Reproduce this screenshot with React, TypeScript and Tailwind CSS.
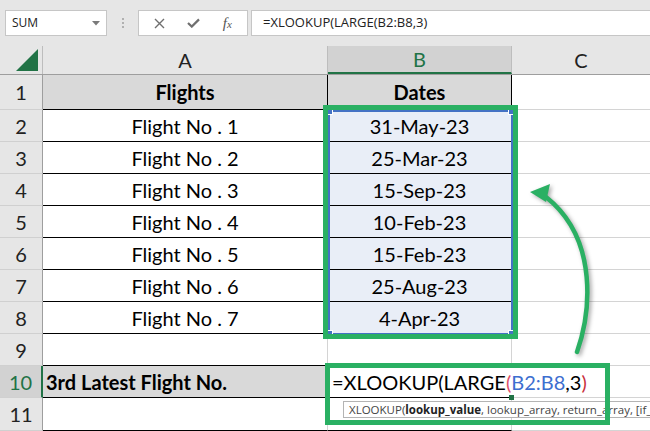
import React from 'react';

// Excel-like sheet: XLOOKUP / LARGE demo

const FLIGHTS = [
  'Flight No . 1',
  'Flight No . 2',
  'Flight No . 3',
  'Flight No . 4',
  'Flight No . 5',
  'Flight No . 6',
  'Flight No . 7',
];

const DATES = ['31-May-23', '25-Mar-23', '15-Sep-23', '10-Feb-23', '15-Feb-23', '25-Aug-23', '4-Apr-23'];

// ============================================
// FORMULA BAR
// ============================================

function Toolbar() {
  return (
    <div className="h-[46px] flex items-start pt-[10px] pl-[5px] bg-[#e6e6e6] font-['Open_Sans',sans-serif]">
      <div className="w-[102px] h-[26px] flex items-center justify-between bg-white border border-[#c6c6c6] pl-[6px] pr-[6px] text-[12px] text-[#222]">
        <span>SUM</span>
        <svg width="8" height="5" viewBox="0 0 8 5">
          <path d="M0 0 L8 0 L4 4.5 Z" fill="#7a7a7a" />
        </svg>
      </div>
      <div className="w-[31px] h-[26px] flex flex-col items-center justify-center gap-[2px]">
        <span className="w-[2px] h-[2px] bg-[#b0b0b0]" />
        <span className="w-[2px] h-[2px] bg-[#b0b0b0]" />
        <span className="w-[2px] h-[2px] bg-[#b0b0b0]" />
      </div>
      <div className="w-[110px] h-[26px] flex items-center justify-around bg-white border border-[#c6c6c6] px-[4px]">
        <svg width="11" height="11" viewBox="0 0 11 11">
          <path d="M1 1 L10 10 M10 1 L1 10" stroke="#6f6f6f" strokeWidth="1.4" />
        </svg>
        <svg width="13" height="10" viewBox="0 0 13 10">
          <path d="M1 5 L4.8 8.6 L12 1.4" stroke="#6f6f6f" strokeWidth="2.2" fill="none" />
        </svg>
        <span className="text-[15px] text-[#555] italic font-['Liberation_Serif',serif] leading-none">
          f<span className="text-[11px]">x</span>
        </span>
      </div>
      <div className="ml-[3px] flex-1 h-[26px] flex items-center bg-white border border-[#c6c6c6] border-r-0 pl-[11px] text-[13px] text-[#222]">
        =XLOOKUP(LARGE(B2:B8,3)
      </div>
    </div>
  );
}

// ============================================
// GRID
// ============================================

function ColumnHeaders() {
  return (
    <div className="h-[29px] flex bg-[#e6e6e6] border-b border-[#9e9e9e] text-[20px] text-[#222]">
      <div className="w-[43px] shrink-0 flex items-end justify-end pr-[4px] pb-[3px] border-r border-[#bdbdbd]">
        <svg width="22" height="22" viewBox="0 0 22 22">
          <path d="M22 0 L22 22 L0 22 Z" fill="#217346" />
        </svg>
      </div>
      <div className="w-[285px] shrink-0 flex items-center justify-center border-r border-[#bdbdbd]">A</div>
      <div className="w-[184px] shrink-0 flex items-center justify-center bg-[#d2d2d2] text-[#217346] border-b-2 border-[#217346] border-r border-r-[#bdbdbd]">
        B
      </div>
      <div className="flex-1 flex items-center justify-center">C</div>
    </div>
  );
}

function RowHead({ n, active }: { n: number; active?: boolean }) {
  return (
    <div
      className={`w-[43px] shrink-0 flex items-center justify-center border-b border-[#d0d0d0] ${
        active
          ? 'bg-[#d2d2d2] text-[#217346] border-r-2 border-r-[#217346]'
          : 'bg-[#e6e6e6] text-[#222] border-r border-r-[#9e9e9e]'
      }`}
    >
      {n}
    </div>
  );
}

function Sheet() {
  return (
    <div className="text-[20px] text-black bg-white">
      {/* Row 1: headings */}
      <div className="h-[35px] flex">
        <RowHead n={1} />
        <div className="w-[285px] shrink-0 flex items-center justify-center bg-[#d9d9d9] font-bold border-r border-b border-black">
          Flights
        </div>
        <div className="w-[184px] shrink-0 flex items-center justify-center bg-[#d9d9d9] font-bold border-r border-b border-black">
          Dates
        </div>
        <div className="flex-1 border-b border-[#d4d4d4]" />
      </div>

      {/* Rows 2-8: data */}
      {FLIGHTS.map((f, i) => (
        <div key={f} className="h-[32px] flex">
          <RowHead n={i + 2} />
          <div className="w-[285px] shrink-0 flex items-center justify-center border-r border-b border-black">{f}</div>
          <div className="w-[184px] shrink-0 flex items-center justify-center bg-[#e9eef7] border-r border-b border-black">
            {DATES[i]}
          </div>
          <div className="flex-1 border-b border-[#d4d4d4]" />
        </div>
      ))}

      {/* Row 9 */}
      <div className="h-[32px] flex">
        <RowHead n={9} />
        <div className="w-[285px] shrink-0 border-b border-black border-r border-r-[#d4d4d4]" />
        <div className="w-[184px] shrink-0 border-b border-black border-r border-r-[#d4d4d4]" />
        <div className="flex-1 border-b border-[#d4d4d4]" />
      </div>

      {/* Row 10: formula */}
      <div className="h-[32px] flex">
        <RowHead n={10} active />
        <div className="w-[285px] shrink-0 flex items-center pl-[3px] bg-[#d9d9d9] font-bold border-b border-black">
          3rd Latest Flight No.
        </div>
        <div className="relative z-10 w-[184px] shrink-0 flex items-center pl-[4px] border-b border-black whitespace-nowrap">
          <span>=XLOOKUP(LARGE</span>
          <span className="text-[#e0506a]">(</span>
          <span className="text-[#3d6fd0]">B2:B8</span>
          <span>,3</span>
          <span className="text-[#c8323c]">)</span>
          <span className="ml-[3px] w-[1px] h-[26px] bg-black" />
          <span className="absolute right-[-2px] bottom-[-3px] w-[5px] h-[5px] bg-[#217346]" />
        </div>
        <div className="flex-1 border-b border-[#d4d4d4]" />
      </div>

      {/* Row 11 */}
      <div className="h-[33px] flex">
        <RowHead n={11} />
        <div className="w-[285px] shrink-0 border-b border-black border-r border-r-[#d4d4d4]" />
        <div className="w-[184px] shrink-0 border-b border-black border-r border-r-[#d4d4d4]" />
        <div className="flex-1 border-b border-[#d4d4d4]" />
      </div>
    </div>
  );
}

// ============================================
// ANNOTATIONS
// ============================================

function Handle({ className }: { className: string }) {
  return <span className={`absolute w-[6px] h-[6px] bg-[#4472c4] border border-white ${className}`} />;
}

function Annotations() {
  return (
    <>
      {/* blue selection of B2:B8 */}
      <div className="absolute left-[328px] top-[110px] w-[185px] h-[225px] border-2 border-[#4472c4]">
        <Handle className="left-[-3px] top-[-3px]" />
        <Handle className="right-[-3px] top-[-3px]" />
        <Handle className="left-[-3px] bottom-[-3px]" />
        <Handle className="right-[-3px] bottom-[-3px]" />
      </div>

      {/* green box around the range */}
      <div className="absolute left-[323px] top-[105px] w-[195px] h-[234px] border-[5px] border-[#2ab063]" />

      {/* function tooltip */}
      <div className="absolute left-[343px] top-[401px] w-[320px] h-[17px] flex items-center pl-[5px] bg-white border border-[#b4b4b4] whitespace-nowrap text-[11.5px] text-[#444] font-['Open_Sans',sans-serif] z-10">
        XLOOKUP(<b className="text-[#222]">lookup_value</b>, lookup_array, return_array, [if_not_found]
      </div>

      {/* green box around the formula cell */}
      <div className="absolute left-[325px] top-[363px] w-[285px] h-[62px] border-[5px] border-[#2ab063] z-20" />

      {/* curved arrow */}
      <svg
        className="absolute left-0 top-0 z-20"
        width="650"
        height="431"
        viewBox="0 0 650 431"
        style={{ filter: 'drop-shadow(2px 2px 2px rgba(0,0,0,0.35))' }}
      >
        <path d="M577 352 C590 315 600 240 546 197" stroke="#2ab063" strokeWidth="4.5" fill="none" strokeLinecap="round" />
        <path d="M530 192 L550 184 L546 202 Z" fill="#2ab063" />
      </svg>
    </>
  );
}

export default function App() {
  return (
    <div className="relative w-[650px] h-[431px] overflow-hidden bg-white font-['Lato',sans-serif]">
      <Toolbar />
      <ColumnHeaders />
      <Sheet />
      <Annotations />
    </div>
  );
}
